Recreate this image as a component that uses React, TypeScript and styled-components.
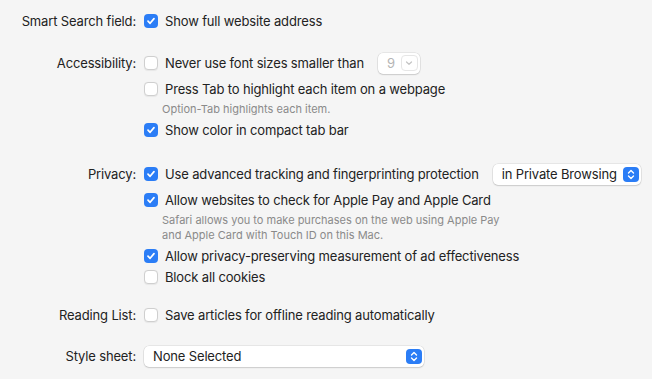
import React from "react";
import styled, { createGlobalStyle } from "styled-components";

const Global = createGlobalStyle`
  html, body { margin: 0; padding: 0; background: #f5f5f5; }
  body { font-family: "Inter", "Liberation Sans", sans-serif; -webkit-font-smoothing: antialiased; }
`;

const Page = styled.div`
  width: 652px;
  height: 379px;
  box-sizing: border-box;
  padding-top: 12px;
  display: flex;
  flex-direction: column;
  gap: 20px;
  color: #222222;
  font-size: 13px;
  letter-spacing: -0.15px;
`;

const Section = styled.div<{ $shift?: number }>`
  display: grid;
  grid-template-columns: 136px 1fr;
  column-gap: 8px;
  align-items: start;
  margin-top: ${(p) => p.$shift ?? 0}px;
`;

const Label = styled.div<{ $h?: number }>`
  text-align: right;
  height: ${(p) => p.$h ?? 18}px;
  line-height: ${(p) => p.$h ?? 18}px;
  white-space: nowrap;
`;

const Column = styled.div`
  display: flex;
  flex-direction: column;
  gap: 3px;
`;

const Row = styled.div<{ $h?: number }>`
  display: flex;
  align-items: center;
  height: ${(p) => p.$h ?? 18}px;
  white-space: nowrap;
`;

const Box = styled.span<{ $on?: boolean }>`
  width: 14px;
  height: 14px;
  box-sizing: border-box;
  border-radius: 4px;
  margin-right: 7px;
  display: inline-flex;
  align-items: center;
  justify-content: center;
  flex: none;
  background: ${(p) => (p.$on ? "#2b7df6" : "#ffffff")};
  border: ${(p) => (p.$on ? "none" : "1px solid #cfcfcf")};
  box-shadow: ${(p) => (p.$on ? "none" : "0 0.5px 1px rgba(0,0,0,0.06)")};
`;

const Caption = styled.div`
  font-size: 11px;
  line-height: 15px;
  letter-spacing: 0;
  color: #8a8a8a;
  padding: 1px 0 1px 18px;
`;

const Popup = styled.div<{ $w: number; $disabled?: boolean }>`
  width: ${(p) => p.$w}px;
  height: 21px;
  box-sizing: border-box;
  background: #ffffff;
  border-radius: 5px;
  box-shadow: 0 0 0 0.5px rgba(0, 0, 0, 0.12), 0 1px 1.5px rgba(0, 0, 0, 0.12);
  display: flex;
  align-items: center;
  justify-content: space-between;
  padding: 0 2px 0 9px;
  color: ${(p) => (p.$disabled ? "#b5b5b5" : "#222222")};
  white-space: nowrap;
  flex: none;
`;

const Stepper = styled.span`
  width: 16px;
  height: 15px;
  border-radius: 4px;
  background: #2b7df6;
  display: inline-flex;
  align-items: center;
  justify-content: center;
`;

const SmallChevron = styled.span`
  width: 17px;
  height: 16px;
  box-sizing: border-box;
  border-radius: 4px;
  border: 1px solid #e6e6e6;
  display: inline-flex;
  align-items: center;
  justify-content: center;
`;

const Spacer = styled.span<{ $w: number }>`
  display: inline-block;
  width: ${(p) => p.$w}px;
  flex: none;
`;

const Check = () => (
  <svg width="10" height="10" viewBox="0 0 10 10">
    <path d="M2 5.2 L4.1 7.3 L8 2.6" fill="none" stroke="#fff" strokeWidth="1.7" strokeLinecap="round" strokeLinejoin="round" />
  </svg>
);

const UpDown = () => (
  <svg width="8" height="11" viewBox="0 0 8 11">
    <path d="M1.5 4 L4 1.5 L6.5 4 M1.5 7 L4 9.5 L6.5 7" fill="none" stroke="#fff" strokeWidth="1.4" strokeLinecap="round" strokeLinejoin="round" />
  </svg>
);

const Down = () => (
  <svg width="8" height="6" viewBox="0 0 8 6">
    <path d="M1.5 2 L4 4.3 L6.5 2" fill="none" stroke="#c4c4c4" strokeWidth="1.2" strokeLinecap="round" strokeLinejoin="round" />
  </svg>
);

const Option = ({ on, children }: { on?: boolean; children: React.ReactNode }) => (
  <>
    <Box $on={on}>{on && <Check />}</Box>
    {children}
  </>
);

export default function App() {
  return (
    <>
      <Global />
      <Page>
        <Section>
          <Label>Smart Search field:</Label>
          <Column>
            <Row>
              <Option on>Show full website address</Option>
            </Row>
          </Column>
        </Section>

        <Section $shift={-1}>
          <Label $h={28}>Accessibility:</Label>
          <Column>
            <Row $h={28}>
              <Option>Never use font sizes smaller than</Option>
              <Spacer $w={14} />
              <Popup $w={42} $disabled>
                9
                <SmallChevron>
                  <Down />
                </SmallChevron>
              </Popup>
            </Row>
            <Row>
              <Option>Press Tab to highlight each item on a webpage</Option>
            </Row>
            <Caption>Option-Tab highlights each item.</Caption>
            <Row>
              <Option on>Show color in compact tab bar</Option>
            </Row>
          </Column>
        </Section>

        <Section $shift={1}>
          <Label $h={28}>Privacy:</Label>
          <Column>
            <Row $h={28}>
              <Option on>Use advanced tracking and fingerprinting protection</Option>
              <Spacer $w={14} />
              <Popup $w={148}>
                in Private Browsing
                <Stepper>
                  <UpDown />
                </Stepper>
              </Popup>
            </Row>
            <Row>
              <Option on>Allow websites to check for Apple Pay and Apple Card</Option>
            </Row>
            <Caption>
              Safari allows you to make purchases on the web using Apple Pay
              <br />
              and Apple Card with Touch ID on this Mac.
            </Caption>
            <Row>
              <Option on>Allow privacy-preserving measurement of ad effectiveness</Option>
            </Row>
            <Row>
              <Option>Block all cookies</Option>
            </Row>
          </Column>
        </Section>

        <Section>
          <Label>Reading List:</Label>
          <Column>
            <Row>
              <Option>Save articles for offline reading automatically</Option>
            </Row>
          </Column>
        </Section>

        <Section>
          <Label $h={24}>Style sheet:</Label>
          <Column>
            <Row $h={24}>
              <Popup $w={280}>
                None Selected
                <Stepper>
                  <UpDown />
                </Stepper>
              </Popup>
            </Row>
          </Column>
        </Section>
      </Page>
    </>
  );
}
